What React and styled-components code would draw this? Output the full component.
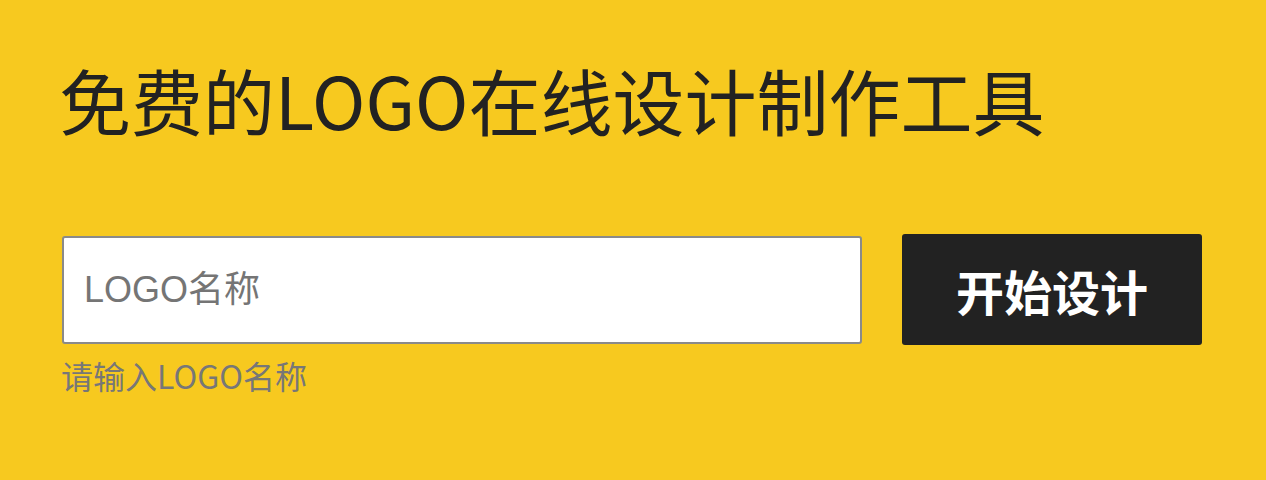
import React from 'react';
import styled, { createGlobalStyle } from 'styled-components';

const GlobalStyle = createGlobalStyle`
  html, body {
    margin: 0;
    padding: 0;
    background: #f7c91f;
  }
`;

const Page = styled.div`
  min-height: 480px;
  box-sizing: border-box;
  padding: 49px 62px 0;
  background: #f7c91f;
  font-family: "Noto Sans CJK SC", sans-serif;
`;

const Title = styled.h1`
  margin: 0 0 0 -3px;
  font-size: 72px;
  font-weight: 400;
  line-height: 100px;
  color: #222;
`;

const Form = styled.form`
  display: flex;
  align-items: center;
  gap: 40px;
  margin-top: 85px;
`;

const NameInput = styled.input`
  box-sizing: border-box;
  width: 800px;
  height: 108px;
  padding: 0 20px;
  border: 2px solid #8a8a8a;
  border-radius: 3px;
  background: #fff;
  font-family: "Liberation Sans", "Noto Sans CJK SC", sans-serif;
  font-size: 36px;
  color: #333;
  outline: none;

  &::placeholder {
    color: #757575;
  }
`;

const StartButton = styled.button`
  width: 300px;
  height: 111px;
  border: none;
  border-radius: 3px;
  background: #222;
  color: #fff;
  font-family: "Noto Sans CJK SC", sans-serif;
  font-size: 48px;
  font-weight: 700;
  cursor: pointer;
`;

const Hint = styled.p`
  margin: 6px 0 0 -1px;
  font-size: 32px;
  line-height: 48px;
  color: #777;
`;

const App = () => (
  <>
    <GlobalStyle />
    <Page>
      <Title>免费的LOGO在线设计制作工具</Title>
      <Form onSubmit={e => e.preventDefault()}>
        <NameInput type="text" placeholder="LOGO名称" />
        <StartButton type="submit">开始设计</StartButton>
      </Form>
      <Hint>请输入LOGO名称</Hint>
    </Page>
  </>
);

export default App;
